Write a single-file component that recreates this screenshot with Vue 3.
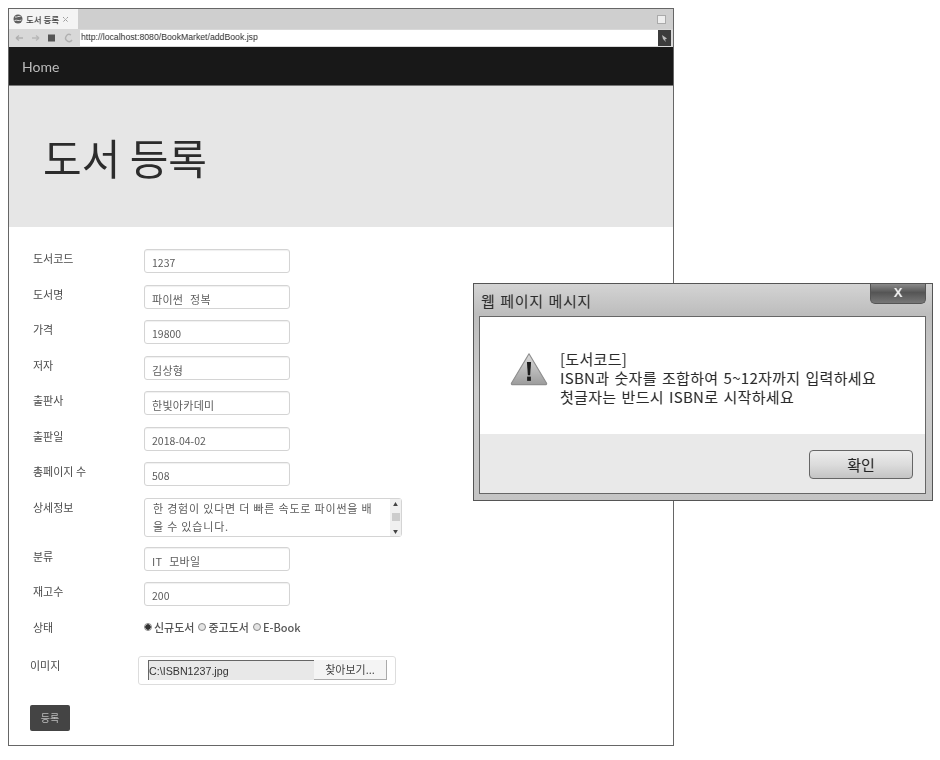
<script setup>
const rows = [
  { label: '도서코드', value: '1237' },
  { label: '도서명', value: '파이썬 정복', ko: true },
  { label: '가격', value: '19800' },
  { label: '저자', value: '김상형', ko: true },
  { label: '출판사', value: '한빛아카데미', ko: true },
  { label: '출판일', value: '2018-04-02' },
  { label: '총페이지 수', value: '508' },
]
const rowsAfter = [
  { label: '분류', value: 'IT 모바일', ko: true },
  { label: '재고수', value: '200' },
]
</script>

<template>
  <div class="stage">
    <div class="browser">
      <div class="chrome-soft">
        <div class="tabbar">
          <div class="tab">
            <svg class="globe" width="10" height="10" viewBox="0 0 10 10"><circle cx="5" cy="5" r="4.500" fill="#5e5e5e"/><path d="M2 3c2 .5 3.500-1.200 5.500-.5M1.500 6.500c2.500-1 4.500 1 7-.5" stroke="#e0e0e0" fill="none"/></svg>
            <span class="tab-title">도서 등록</span>
            <svg class="tab-x" width="7" height="7" viewBox="0 0 7 7"><path d="M1 1l5 5M6 1l-5 5" stroke="#999" stroke-width="1" stroke-dasharray="1.500 .6" fill="none"/></svg>
          </div>
          <div class="max-btn"></div>
        </div>
        <div class="urlbar">
          <div class="tools">
            <svg width="64" height="12" viewBox="0 0 64 12">
              <path d="M1 6h7M1 6l3-2.500M1 6l3 2.500" stroke="#b0b0b0" stroke-width="1.400" fill="none"/>
              <path d="M24 6h-7M24 6l-3-2.500M24 6l-3 2.500" stroke="#b8b8b8" stroke-width="1.400" fill="none"/>
              <rect x="33" y="2.500" width="7" height="7" fill="#555"/>
              <path d="M56 3a3.500 3.500 0 1 0 1 5" stroke="#b0b0b0" stroke-width="1.400" fill="none"/>
            </svg>
          </div>
          <div class="url">http://localhost:8080/BookMarket/addBook.jsp</div>
          <div class="go"><svg width="9" height="9" viewBox="0 0 9 9"><path d="M2 1l5 3.500-2 1 1 2.500-3-3z" fill="#bbb"/></svg></div>
        </div>
        <nav class="navbar"><a class="brand">Home</a></nav>
        <header class="jumbo"><h1>도서 등록</h1></header>
        <form class="form" @submit.prevent>
          <div v-for="r in rows" :key="r.label" class="row">
            <label class="lbl">{{ r.label }}</label>
            <div class="field" :class="{ ko: r.ko }">{{ r.value }}</div>
          </div>
          <div class="row row-area">
            <label class="lbl">상세정보</label>
            <div class="area">
              <div class="area-text">한 경험이 있다면 더 빠른 속도로 파이썬을 배<br>울 수 있습니다.</div>
              <div class="scroll">
                <span class="arr">▲</span>
                <span class="thumb"></span>
                <span class="arr">▼</span>
              </div>
            </div>
          </div>
          <div v-for="r in rowsAfter" :key="r.label" class="row">
            <label class="lbl">{{ r.label }}</label>
            <div class="field" :class="{ ko: r.ko }">{{ r.value }}</div>
          </div>
          <div class="row row-radio">
            <label class="lbl">상태</label>
            <div class="radios">
              <span class="radio on"></span><span>신규도서</span>
              <span class="radio"></span><span>중고도서</span>
              <span class="radio"></span><span>E-Book</span>
            </div>
          </div>
          <div class="row row-file">
            <label class="lbl lbl-file">이미지</label>
            <div class="filebox">
              <div class="filepath">C:\ISBN1237.jpg</div>
              <div class="filebtn">찾아보기...</div>
            </div>
          </div>
          <button class="submit" type="button">등록</button>
        </form>
      </div>
    </div>

    <div class="dialog">
      <div class="dlg-title">
        <span>웹 페이지 메시지</span>
        <div class="dlg-close">X</div>
      </div>
      <div class="dlg-inner">
        <div class="dlg-msg">
          <svg class="warn" width="38" height="34" viewBox="0 0 40 35">
            <defs>
              <linearGradient id="tri" x1="0" y1="0" x2="0" y2="1">
                <stop offset="0" stop-color="#dcdcdc"/>
                <stop offset="1" stop-color="#9c9c9c"/>
              </linearGradient>
            </defs>
            <path d="M20 1.500 38.500 32.500Q39 34 37 34H3Q1 34 1.500 32.500Z" fill="url(#tri)" stroke="#8e8e8e" stroke-width="1.200" stroke-linejoin="round"/>
            <path d="M17.800 10h4.400l-1 14h-2.400z" fill="#1c1c1c"/>
            <rect x="18" y="25.500" width="4" height="4.500" fill="#1c1c1c"/>
          </svg>
          <p class="dlg-text">[도서코드]<br>ISBN과 숫자를 조합하여 5~12자까지 입력하세요<br>첫글자는 반드시 ISBN로 시작하세요</p>
        </div>
        <div class="dlg-foot">
          <button class="dlg-ok" type="button">확인</button>
        </div>
      </div>
    </div>
  </div>
</template>

<style>
html, body { margin: 0; background: #fff; }
</style>

<style scoped>
.stage {
  position: relative;
  width: 940px;
  height: 760px;
  background: #fff;
  overflow: hidden;
  font-family: "Noto Sans CJK KR", "Open Sans", sans-serif;
  filter: grayscale(1);
}
.browser {
  position: absolute;
  left: 8px;
  top: 8px;
  width: 664px;
  height: 736px;
  border: 1px solid #666;
  background: #fff;
  overflow: hidden;
}
.chrome-soft { filter: blur(0.45px); height: 100%; }
.tabbar {
  height: 20px;
  background: #cfcfcf;
  display: flex;
  justify-content: space-between;
  align-items: center;
}
.tab {
  height: 20px;
  width: 69px;
  background: #f4f4f4;
  display: flex;
  align-items: center;
  gap: 3px;
  padding-left: 4px;
  box-sizing: border-box;
  font-size: 8.500px;
  color: #444;
}
.tab-title { font-weight: 500; white-space: nowrap; }
.tab-x { flex: none; }
.max-btn {
  width: 7px;
  height: 7px;
  margin-right: 7px;
  border: 1px solid #aaa;
  background: #eee;
}
.urlbar {
  height: 18px;
  background: #d8d8d8;
  display: flex;
  align-items: center;
}
.tools { width: 71px; padding-left: 6px; box-sizing: border-box; display: flex; }
.url {
  flex: 1;
  height: 16px;
  background: #fff;
  font: 8.700px/15px "Liberation Sans", sans-serif;
  color: #333;
  padding-left: 1px;
}
.go {
  width: 13px;
  height: 16px;
  background: #3c3c3c;
  display: flex;
  align-items: center;
  justify-content: center;
  margin-right: 2px;
}
.navbar {
  height: 39px;
  background: #181818;
  display: flex;
  align-items: center;
  padding-left: 13px;
  border-bottom: 1px solid #777;
  box-sizing: border-box;
}
.brand { font: 14px "Lato", sans-serif; color: #bcbcbc; }
.jumbo {
  height: 141px;
  background: #e6e6e6;
  display: flex;
  align-items: center;
  padding-left: 34px;
}
.jumbo h1 {
  margin: 0;
  font-size: 42px;
  font-weight: 400;
  color: #2c2c2c;
  letter-spacing: 0;
}
.form {
  display: flex;
  flex-direction: column;
  padding: 22px 0 0 24px;
  color: #555;
}
.row {
  display: flex;
  margin-bottom: 11.500px;
}
.lbl {
  width: 111px;
  flex: none;
  font-size: 11px;
  line-height: 18px;
  color: #4a4a4a;
}
.field {
  width: 146px;
  height: 24px;
  box-sizing: border-box;
  border: 1px solid #d4d4d4;
  border-radius: 3px;
  background: #fff;
  padding: 5px 0 0 7px;
  font-size: 10.500px;
  line-height: 16px;
  color: #5c5c5c;
  box-shadow: inset 0 1px 1px #f0f0f0;
}
.field.ko { font-size: 11px; word-spacing: 4px; letter-spacing: 0.3px; }
.row-area { margin-bottom: 10px; }
.area {
  width: 258px;
  height: 39px;
  box-sizing: border-box;
  border: 1px solid #d4d4d4;
  border-radius: 3px;
  display: flex;
  justify-content: space-between;
}
.area-text {
  padding: 0 0 0 8px;
  font-size: 11px;
  line-height: 18px;
  color: #5c5c5c;
  width: 240px;
  white-space: nowrap;
  letter-spacing: 0.8px;
}
.scroll {
  width: 11px;
  background: #f0f0f0;
  display: flex;
  flex-direction: column;
  justify-content: space-between;
  align-items: center;
  font-size: 5px;
  line-height: 10px;
  color: #444;
}
.thumb { width: 8px; height: 8px; background: #ccc; }
.row-radio { height: 16px; margin-top: 1px; margin-bottom: 21px; align-items: center; }
.radios {
  display: flex;
  align-items: center;
  gap: 2px;
  font-size: 11px;
  font-weight: 500;
  color: #555;
}
.radios span:nth-child(3), .radios span:nth-child(5) { margin-left: 2px; }
.radio {
  width: 8px;
  height: 8px;
  box-sizing: border-box;
  border: 1px solid #888;
  border-radius: 50%;
  background: #e4e4e4;
}
.radio.on { background: radial-gradient(circle, #333 0 2.500px, #e4e4e4 3px); }
.row-file { margin-left: -3px; align-items: flex-start; margin-bottom: 20px; }
.lbl-file { width: 108px; line-height: 18px; }
.filebox {
  width: 258px;
  height: 29px;
  box-sizing: border-box;
  border: 1px solid #ddd;
  border-radius: 3px;
  display: flex;
  align-items: center;
  padding-left: 9px;
}
.filepath {
  width: 166px;
  height: 20px;
  box-sizing: border-box;
  background: #e8e8e8;
  border: 1px solid #666;
  border-width: 1px 0 0 1px;
  font: 10.700px/20px "Liberation Sans", sans-serif;
  color: #333;
}
.filebtn {
  width: 73px;
  height: 20px;
  box-sizing: border-box;
  border: 1px solid #aaa;
  border-width: 0 1px 1px 0;
  background: #f4f4f4;
  font-size: 11px;
  line-height: 19px;
  text-align: center;
  color: #444;
}
.submit {
  width: 40px;
  height: 26px;
  padding: 0;
  border: none;
  border-radius: 2px;
  background: #444;
  color: #bbb;
  font: 10px "Noto Sans CJK KR", sans-serif;
  margin-left: -3px;
}
.dialog {
  position: absolute;
  left: 473px;
  top: 283px;
  width: 460px;
  height: 218px;
  box-sizing: border-box;
  border: 1px solid #555;
  background: linear-gradient(#d4d4d4, #bdbdbd 14%, #cdcdcd 50%, #c4c4c4);
  padding: 0 6px 6px 5px;
  display: flex;
  flex-direction: column;
}
.dlg-title {
  height: 32px;
  flex: none;
  display: flex;
  align-items: center;
  justify-content: space-between;
  font-size: 15px;
  letter-spacing: 0.6px;
  word-spacing: 1px;
  color: #2c2c2c;
  padding-left: 2px;
}
.dlg-close {
  align-self: flex-start;
  width: 56px;
  height: 20px;
  box-sizing: border-box;
  border: 1px solid #555;
  border-top: none;
  border-radius: 0 0 5px 5px;
  background: linear-gradient(#8a8a8a, #555 45%, #777);
  color: #eee;
  font: 700 13px/17px "Liberation Sans", sans-serif;
  text-align: center;
  letter-spacing: 0;
}
.dlg-inner {
  flex: 1;
  border: 1px solid #666;
  background: #fff;
  display: flex;
  flex-direction: column;
}
.dlg-msg {
  height: 117px;
  flex: none;
  display: flex;
  padding: 32px 0 0 30px;
  box-sizing: border-box;
}
.warn { flex: none; margin-top: 3px; }
.dlg-text {
  margin: 0 0 0 12px;
  font-size: 15px;
  line-height: 19px;
  color: #2a2a2a;
  white-space: nowrap;
  letter-spacing: 0.3px;
  word-spacing: 1.500px;
}
.dlg-foot {
  flex: 1;
  background: #e9e9e9;
  display: flex;
  justify-content: flex-end;
  align-items: flex-start;
  padding: 16px 12px 0 0;
}
.dlg-ok {
  width: 104px;
  height: 29px;
  padding: 0;
  border: 1px solid #666;
  border-radius: 4px;
  background: linear-gradient(#ececec, #dcdcdc 50%, #c4c4c4);
  font: 15px "Noto Sans CJK KR", sans-serif;
  color: #222;
}
</style>
